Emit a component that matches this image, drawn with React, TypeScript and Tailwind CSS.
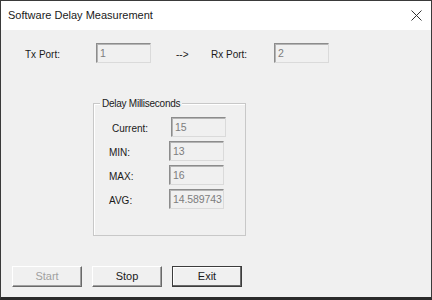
import React from 'react'

const Field = ({ value, className = '' }: { value: string; className?: string }) => (
    <div
        className={`h-[20px] w-[55px] overflow-hidden whitespace-nowrap border border-t-[#8c8c8c] border-l-[#8c8c8c] border-r-[#dadada] border-b-[#dadada] bg-[#f0f0f0] pl-[3px] pt-[2px] text-[10.5px] leading-[14px] tracking-[-0.1px] text-[#7d7d7d] shadow-[inset_1px_1px_0_#b4b4b4] ${className}`}>
        {value}
    </div>
)

const Button = ({ label, disabled = false, isDefault = false }: { label: string; disabled?: boolean; isDefault?: boolean }) => (
    <div
        className={`flex h-[21px] w-[70px] items-center justify-center border text-[11px] ${
            isDefault
                ? 'border-[#3c3c3c] shadow-[inset_-1px_-1px_0_#6a6a6a,inset_1px_1px_0_#ffffff]'
                : 'border-t-[#ffffff] border-l-[#ffffff] border-r-[#696969] border-b-[#696969] shadow-[inset_-1px_-1px_0_#a0a0a0]'
        } bg-[#f0f0f0] ${disabled ? 'text-[#a0a0a0]' : 'text-[#1a1a1a]'}`}>
        {label}
    </div>
)

export default function App() {
    return (
        <div className="flex h-[300px] w-[432px] flex-col overflow-hidden border-x border-t border-b-[3px] border-x-[#3a3a3a] border-t-[#3a3a3a] border-b-[#2a2a2a] bg-[#f0f0f0] font-['Liberation_Sans','Arial',sans-serif] text-[#1a1a1a]">
            <div className="flex h-[29px] shrink-0 items-center justify-between bg-white pl-[7px] pr-[8px]">
                <span className="text-[11px]">Software Delay Measurement</span>
                <svg width="11" height="11" viewBox="0 0 11 11" className="mr-[1px]">
                    <path d="M0.5 0.5 L10.5 10.5 M10.5 0.5 L0.5 10.5" stroke="#333" strokeWidth="1" fill="none" />
                </svg>
            </div>
            <div className="flex flex-1 flex-col">
                <div className="mt-[13px] flex items-center text-[10px]">
                    <span className="ml-[24px] w-[71px] pt-[3px]">Tx Port:</span>
                    <Field value="1" />
                    <span className="ml-[25px] w-[35px] pt-[3px]">--&gt;</span>
                    <span className="w-[63px] pt-[3px]">Rx Port:</span>
                    <Field value="2" />
                </div>
                <div className="relative ml-[92px] mt-[40px] h-[133px] w-[153px] border border-[#c8c8c8] shadow-[inset_1px_1px_0_#ffffff]">
                    <span className="absolute -top-[8px] left-[6px] bg-[#f0f0f0] px-[2px] text-[10px] tracking-[-0.25px]">Delay Milliseconds</span>
                    <div className="mt-[13px] flex flex-col gap-[4px] text-[10px]">
                        <div className="flex items-center">
                            <span className="ml-[18px] w-[59px] pt-[3px]">Current:</span>
                            <Field value="15" />
                        </div>
                        <div className="flex items-center">
                            <span className="ml-[15px] w-[60px] pt-[3px]">MIN:</span>
                            <Field value="13" />
                        </div>
                        <div className="flex items-center">
                            <span className="ml-[15px] w-[60px] pt-[3px]">MAX:</span>
                            <Field value="16" />
                        </div>
                        <div className="flex items-center">
                            <span className="ml-[15px] w-[60px] pt-[3px]">AVG:</span>
                            <Field value="14.589743" className="pl-[2px]" />
                        </div>
                    </div>
                </div>
                <div className="mt-auto mb-[10px] ml-[11px] flex gap-[10px]">
                    <Button label="Start" disabled />
                    <Button label="Stop" />
                    <Button label="Exit" isDefault />
                </div>
            </div>
        </div>
    )
}
